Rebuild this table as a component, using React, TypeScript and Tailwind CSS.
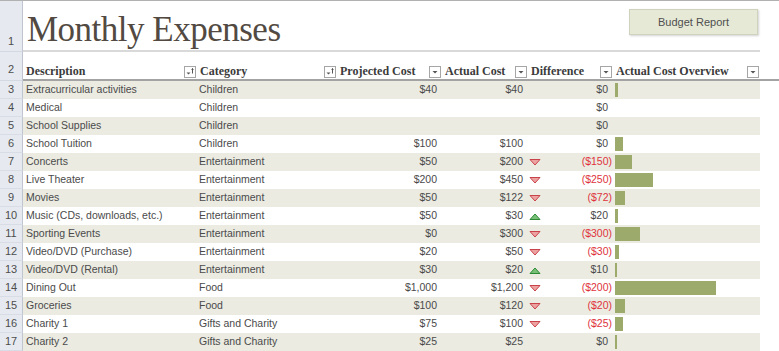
import React from 'react';

type Row = [string, string, number | null, number | null];

const rows: Row[] = [
  ['Extracurricular activities', 'Children', 40, 40],
  ['Medical', 'Children', null, null],
  ['School Supplies', 'Children', null, null],
  ['School Tuition', 'Children', 100, 100],
  ['Concerts', 'Entertainment', 50, 200],
  ['Live Theater', 'Entertainment', 200, 450],
  ['Movies', 'Entertainment', 50, 122],
  ['Music (CDs, downloads, etc.)', 'Entertainment', 50, 30],
  ['Sporting Events', 'Entertainment', 0, 300],
  ['Video/DVD (Purchase)', 'Entertainment', 20, 50],
  ['Video/DVD (Rental)', 'Entertainment', 30, 20],
  ['Dining Out', 'Food', 1000, 1200],
  ['Groceries', 'Food', 100, 120],
  ['Charity 1', 'Gifts and Charity', 75, 100],
  ['Charity 2', 'Gifts and Charity', 25, 25],
];

const money = (n: number) => '$' + n.toLocaleString('en-US');

const cols = 'grid grid-cols-[174px_140px_105px_86px_85px_147px]';

function FilterBtn({ sort }: { sort?: boolean }) {
  return (
    <svg width="12" height="12" viewBox="0 0 12 12" className="shrink-0">
      <rect x="0.5" y="0.5" width="11" height="11" fill="#fff" stroke="#a6a6a6" />
      {sort ? (
        <>
          <path d="M2.5 6.5h4l-2 2z" fill="#555" />
          <path d="M8.5 2.5v5M7.5 3.5l1-1 1 1" stroke="#555" strokeWidth="1" fill="none" />
        </>
      ) : (
        <path d="M3.5 5h5l-2.5 2.5z" fill="#555" />
      )}
    </svg>
  );
}

function Arrow({ up }: { up: boolean }) {
  return (
    <svg width="12" height="7" viewBox="0 0 12 7" className="shrink-0">
      {up ? (
        <path d="M1 6.5h10L6 1z" fill="#78c078" stroke="#2f8a36" strokeWidth="1" />
      ) : (
        <path d="M1 0.5h10L6 6z" fill="#eda2a2" stroke="#c8434a" strokeWidth="1" />
      )}
    </svg>
  );
}

function HeadCell({ label, sort }: { label: string; sort?: boolean }) {
  return (
    <div className="flex items-end justify-between pl-[3px] pr-[1px] pb-[1px] border-b-2 border-[#a3a3a3]">
      <span className="font-['Liberation_Serif',serif] font-bold text-[12px] leading-[14px] text-[#3b3b3b]">
        {label}
      </span>
      <FilterBtn sort={sort} />
    </div>
  );
}

export default function App() {
  return (
    <div className="w-[779px] h-[351px] overflow-hidden bg-white border-t border-[#b1b1b1] font-['Liberation_Sans',Arial,sans-serif]">
      {/* row 1 */}
      <div className="flex h-[51px]">
        <div className="w-[23px] shrink-0 bg-[#e6eaf0] border-r border-[#bfc6cf] border-b border-b-[#d3d9e1] flex items-end justify-center pb-[2px] text-[11px] text-[#4d4d4d]">
          1
        </div>
        <div className="w-[737px] flex justify-between border-b-2 border-[#d9d9d9]">
          <div className="pl-[4px] pt-[9px] font-['Liberation_Serif',serif] text-[35px] leading-[40px] tracking-[-0.5px] text-[#524a42]">
            Monthly Expenses
          </div>
          <div className="mt-[8px] mr-[2px] w-[129px] h-[26px] bg-[#e6e9d6] border border-[#cfd3bd] shadow-[1px_1px_2px_rgba(0,0,0,0.18)] flex items-center justify-center text-[11px] text-[#4f4f4f]">
            Budget Report
          </div>
        </div>
      </div>

      {/* row 2 header */}
      <div className="flex h-[29px]">
        <div className="w-[23px] shrink-0 bg-[#e6eaf0] border-r border-[#bfc6cf] border-b border-b-[#d3d9e1] flex items-end justify-center pb-[3px] text-[11px] text-[#4d4d4d]">
          2
        </div>
        <div className={cols}>
          <HeadCell label="Description" sort />
          <HeadCell label="Category" sort />
          <HeadCell label="Projected Cost" />
          <HeadCell label="Actual Cost" />
          <HeadCell label="Difference" />
          <HeadCell label="Actual Cost Overview" />
        </div>
        <div className="flex-1 border-b-2 border-[#a3a3a3]" />
      </div>

      {/* data rows */}
      {rows.map(([desc, cat, proj, act], i) => {
        const diff = (proj ?? 0) - (act ?? 0);
        const bar = act ? Math.max(1, Math.round(act * 0.084)) : 0;
        const shaded = i % 2 === 0;
        return (
          <div key={i} className="flex h-[18px] text-[10.5px] text-[#4a4a4a]">
            <div className="w-[23px] shrink-0 bg-[#e6eaf0] border-r border-[#bfc6cf] border-b border-b-[#d8dde5] flex items-center justify-center text-[11px] text-[#4d4d4d]">
              {i + 3}
            </div>
            <div className={`${cols} items-center ${shaded ? 'bg-[#ebebe2]' : 'bg-white'}`}>
              <div className="pl-[3px] whitespace-nowrap">{desc}</div>
              <div className="pl-[2px] whitespace-nowrap">{cat}</div>
              <div className="text-right pr-[5px]">{proj !== null ? money(proj) : ''}</div>
              <div className="text-right pr-[5px]">{act !== null ? money(act) : ''}</div>
              <div className="flex items-center justify-between pl-[1px]">
                {diff !== 0 ? <Arrow up={diff > 0} /> : <span />}
                {diff < 0 ? (
                  <span className="text-[#e0323c] pr-[1px]">({money(-diff)})</span>
                ) : (
                  <span className="pr-[5px]">{money(diff)}</span>
                )}
              </div>
              <div className="flex items-center h-[18px] pl-[2px]">
                {bar > 0 && <div className="h-[14px] bg-[#9caa6b]" style={{ width: bar }} />}
              </div>
            </div>
            <div className="flex-1 bg-white" />
          </div>
        );
      })}
    </div>
  );
}
